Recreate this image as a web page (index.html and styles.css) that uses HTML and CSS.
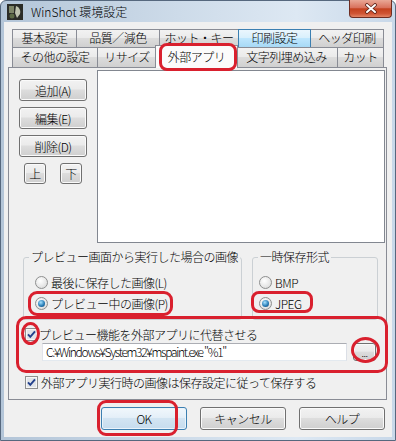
FILE: index.html
```html
<!DOCTYPE html>
<html lang="ja">
<head>
  <meta charset="UTF-8">
  <title>WinShot 環境設定</title>
  <link rel="stylesheet" href="styles.css">
</head>
<body>

<div class="window">
  <div class="titlebar">
    <svg class="app-icon" width="16" height="16" viewBox="0 0 16 16">
      <rect width="16" height="16" fill="#2b2c27"/>
      <path d="M2 2h5v7H2z" fill="#7d8466"/>
      <path d="M9 2c3 1 5 4 4 8l-3 4-2-5z" fill="#bfc3ae"/>
      <circle cx="5" cy="12" r="2.5" fill="#5d6a45"/>
    </svg>
    <span class="title">WinShot 環境設定</span>
    <div class="close">
      <svg width="14" height="11" viewBox="0 0 14 11">
        <path d="M3 2l8 7M11 2l-8 7" stroke="#5a2218" stroke-width="3.6" stroke-linecap="round"/>
        <path d="M3 2l8 7M11 2l-8 7" stroke="#fff" stroke-width="2" stroke-linecap="round"/>
      </svg>
    </div>
  </div>

  <div class="client">
    <div class="tabs">
      <div class="tab-row back">
        <div class="tab">基本設定</div>
        <div class="tab">品質／減色</div>
        <div class="tab">ホット・キー</div>
        <div class="tab hover">印刷設定</div>
        <div class="tab">ヘッダ印刷</div>
      </div>
      <div class="tab-row front">
        <div class="tab">その他の設定</div>
        <div class="tab">リサイズ</div>
        <div class="tab active">外部アプリ</div>
        <div class="tab">文字列埋め込み</div>
        <div class="tab">カット</div>
      </div>
    </div>

    <div class="panel">
      <div class="apps">
        <div class="side">
          <button class="btn wide">追加(A)</button>
          <button class="btn wide">編集(E)</button>
          <button class="btn wide">削除(D)</button>
          <div class="move">
            <button class="btn small">上</button>
            <button class="btn small">下</button>
          </div>
        </div>
        <div class="listbox"></div>
      </div>

      <div class="groups">
        <fieldset class="group source">
          <legend>プレビュー画面から実行した場合の画像</legend>
          <label class="opt"><span class="radio"></span>最後に保存した画像(L)</label>
          <label class="opt"><span class="radio on"></span>プレビュー中の画像(P)</label>
        </fieldset>
        <fieldset class="group format">
          <legend>一時保存形式</legend>
          <label class="opt"><span class="radio"></span>BMP</label>
          <label class="opt"><span class="radio on"></span>JPEG</label>
        </fieldset>
      </div>

      <label class="check first">
        <svg class="box" width="13" height="13" viewBox="0 0 13 13">
          <rect x="0.5" y="0.5" width="12" height="12" fill="#f6f6f6" stroke="#8e8f8f"/>
          <rect x="2" y="2" width="9" height="9" fill="#e1e4e8"/>
          <path d="M3 6.3l2.3 2.6L10 3.3" fill="none" stroke="#23418c" stroke-width="1.9"/>
        </svg>プレビュー機能を外部アプリに代替させる
      </label>
      <div class="cmd-row">
        <div class="textbox">C:¥Windows¥System32¥mspaint.exe "%1"</div>
        <button class="btn browse">...</button>
      </div>

      <label class="check save">
        <svg class="box" width="13" height="13" viewBox="0 0 13 13">
          <rect x="0.5" y="0.5" width="12" height="12" fill="#f6f6f6" stroke="#8e8f8f"/>
          <rect x="2" y="2" width="9" height="9" fill="#e1e4e8"/>
          <path d="M3 6.3l2.3 2.6L10 3.3" fill="none" stroke="#23418c" stroke-width="1.9"/>
        </svg>外部アプリ実行時の画像は保存設定に従って保存する
      </label>
    </div>

    <div class="footer">
      <button class="btn default">OK</button>
      <button class="btn">キャンセル</button>
      <button class="btn">ヘルプ</button>
    </div>
  </div>
</div>

<!-- red annotation marks -->
<div class="mark m-tab"></div>
<div class="mark m-radio"></div>
<div class="mark m-jpeg"></div>
<div class="mark m-ext"></div>
<div class="mark m-check"></div>
<div class="mark m-browse"></div>
<div class="mark m-ok"></div>

</body>
</html>
```

FILE: styles.css
```css
* {
  box-sizing: border-box;
}
body {
  margin: 0;
  position: relative;
  background: #fff;
  font-family: "Noto Sans CJK JP", "Noto Sans", sans-serif;
  font-size: 12px;
  font-weight: 300;
  letter-spacing: -0.5px;
  color: #000;
}

.window {
  width: 396px;
  height: 441px;
  border: 1px solid #56687e;
  border-radius: 6px 6px 0 0;
  padding: 0 3px 3px;
  display: flex;
  flex-direction: column;
  background: linear-gradient(to right, #b3c5d8, #cddbe9 45%, #dde8f3 75%, #c8d8e9);
}

/* title bar */
.titlebar {
  height: 21px;
  display: flex;
  align-items: center;
  padding-left: 3px;
}
.app-icon {
  margin-right: 8px;
}
.title {
  font-size: 12px;
  letter-spacing: 0;
  line-height: 14px;
}
.close {
  width: 43px;
  height: 18px;
  margin: -1px 0 0 auto;
  align-self: flex-start;
  display: flex;
  align-items: center;
  justify-content: center;
  border: 1px solid #6e2d22;
  border-top: 0;
  border-radius: 0 0 4px 4px;
  background: linear-gradient(#e9a896, #d9725d 45%, #c3411f 52%, #cf5535 80%, #e38566);
}

/* client */
.client {
  flex: 1;
  background: #f0f0f0;
  padding: 7px 5px 0 4px;
}

/* tabs */
.tabs {
  margin-left: 4px;
  width: 372px;
}
.tab-row {
  display: grid;
}
.tab-row.back {
  grid-template-columns: 65px 83px 79px 72px 73px;
  height: 18px;
}
.tab-row.front {
  grid-template-columns: 86px 59px 79px 102px 46px;
  height: 20px;
}
.tab {
  border: 1px solid #898c95;
  border-bottom: 0;
  text-align: center;
  white-space: nowrap;
  background: linear-gradient(#f2f2f2, #ebebeb 45%, #dcdcdc 50%, #d0d0d0);
}
.tab + .tab {
  border-left: 0;
}
.back .tab {
  line-height: 16px;
}
.front .tab {
  line-height: 18px;
}
.tab.hover {
  border-left: 1px solid #3c7fb1;
  border-color: #3c7fb1;
  margin-left: -1px;
  background: linear-gradient(#eaf6fd, #d9f0fc 45%, #bee6fd 50%, #a7d9f5);
}
.tab.active {
  position: relative;
  z-index: 1;
  margin: -2px -2px -1px;
  border-left: 1px solid #898c95;
  background: #fbfbfb;
  line-height: 21px;
}

/* tab page */
.panel {
  height: 333px;
  border: 1px solid #898c95;
  padding: 2px 1px 0 0;
  background: #f0f0f0;
}
.apps {
  display: flex;
}
.side {
  width: 88px;
  padding: 9px 0 0 10px;
  display: flex;
  flex-direction: column;
  gap: 6px;
}
.move {
  display: flex;
  gap: 14px;
  padding-left: 5px;
}
.listbox {
  width: 288px;
  height: 173px;
  border: 1px solid #828790;
  background: #fff;
}

/* buttons */
.btn {
  font: inherit;
  letter-spacing: inherit;
  color: #000;
  padding: 0;
  border: 1px solid #707070;
  border-radius: 3px;
  background: linear-gradient(#f2f2f2, #ebebeb 45%, #dddddd 50%, #cfcfcf);
  box-shadow: inset 0 0 0 1px #fafafa;
}
.btn.wide {
  width: 68px;
  height: 22px;
}
.btn.small {
  width: 22px;
  height: 21px;
}
.btn.browse {
  width: 23px;
  height: 18px;
  margin-left: 6px;
  font-size: 10px;
  line-height: 12px;
  padding-top: 2px;
}

/* group boxes */
.groups {
  display: flex;
  gap: 10px;
  margin-top: 7px;
  padding-left: 14px;
}
.group {
  margin: 0;
  padding: 0 0 5px;
  min-width: 0;
  border: 1px solid #cbd0d4;
  border-radius: 3px;
}
.group legend {
  margin-left: 5px;
  padding: 0 2px;
  line-height: 14px;
  white-space: nowrap;
}
.group.source {
  width: 219px;
}
.group.format {
  width: 126px;
}
.source .opt {
  padding-left: 11px;
}
.format .opt {
  padding-left: 6px;
}
.opt {
  display: flex;
  align-items: center;
  gap: 3px;
  height: 21px;
}
.opt:first-of-type {
  margin-top: 8px;
}
.radio {
  width: 13px;
  height: 13px;
  border-radius: 50%;
  border: 1px solid #8e8f8f;
  background: radial-gradient(circle at 40% 35%, #fff, #e6e6e6 60%, #cfcfcf);
}
.radio.on::after {
  content: "";
  display: block;
  width: 7px;
  height: 7px;
  margin: 2px;
  border-radius: 50%;
  background: radial-gradient(circle at 40% 35%, #a7e2ff, #2b7fb8 55%, #0e3c66);
}

/* external app */
.check {
  display: flex;
  align-items: center;
  gap: 1px;
  height: 16px;
  padding-left: 16px;
}
.check.first {
  margin-top: 6px;
}
.check.save {
  margin-top: 13px;
  gap: 3px;
}
.cmd-row {
  display: flex;
  margin-top: 1px;
  padding-left: 33px;
}
.textbox {
  width: 305px;
  height: 18px;
  border: 1px solid #abadb3;
  border-color: #abadb3 #dbdfe6 #e3e9ef #e2e3ea;
  background: #fff;
  padding-left: 3px;
  line-height: 16px;
  letter-spacing: -1.3px;
  white-space: nowrap;
}

/* bottom buttons */
.footer {
  display: flex;
  justify-content: flex-end;
  gap: 13px;
  padding-top: 7px;
  margin-right: 2px;
}
.footer .btn {
  width: 86px;
  height: 23px;
}
.btn.default {
  border-color: #3c7fb1;
  background: linear-gradient(#f1f7fc, #e4eff8 45%, #d2e4f2 50%, #c6dcee);
  box-shadow: inset 0 0 0 1px #eaf4fb;
}

/* red annotation marks */
.mark {
  position: absolute;
  border: 3px solid #d9202e;
  border-radius: 9px;
  z-index: 10;
}
.m-tab {
  left: 159px;
  top: 43px;
  width: 78px;
  height: 28px;
  border-radius: 8px;
}
.m-radio {
  left: 28px;
  top: 291px;
  width: 145px;
  height: 25px;
}
.m-jpeg {
  left: 251px;
  top: 291px;
  width: 62px;
  height: 22px;
  border-radius: 8px;
}
.m-ext {
  left: 16px;
  top: 316px;
  width: 372px;
  height: 57px;
  border-radius: 10px;
}
.m-check {
  left: 21px;
  top: 322px;
  width: 19px;
  height: 23px;
  border-radius: 50%;
}
.m-browse {
  left: 351px;
  top: 337px;
  width: 29px;
  height: 26px;
  border-radius: 50%;
}
.m-ok {
  left: 97px;
  top: 400px;
  width: 81px;
  height: 36px;
}
```
